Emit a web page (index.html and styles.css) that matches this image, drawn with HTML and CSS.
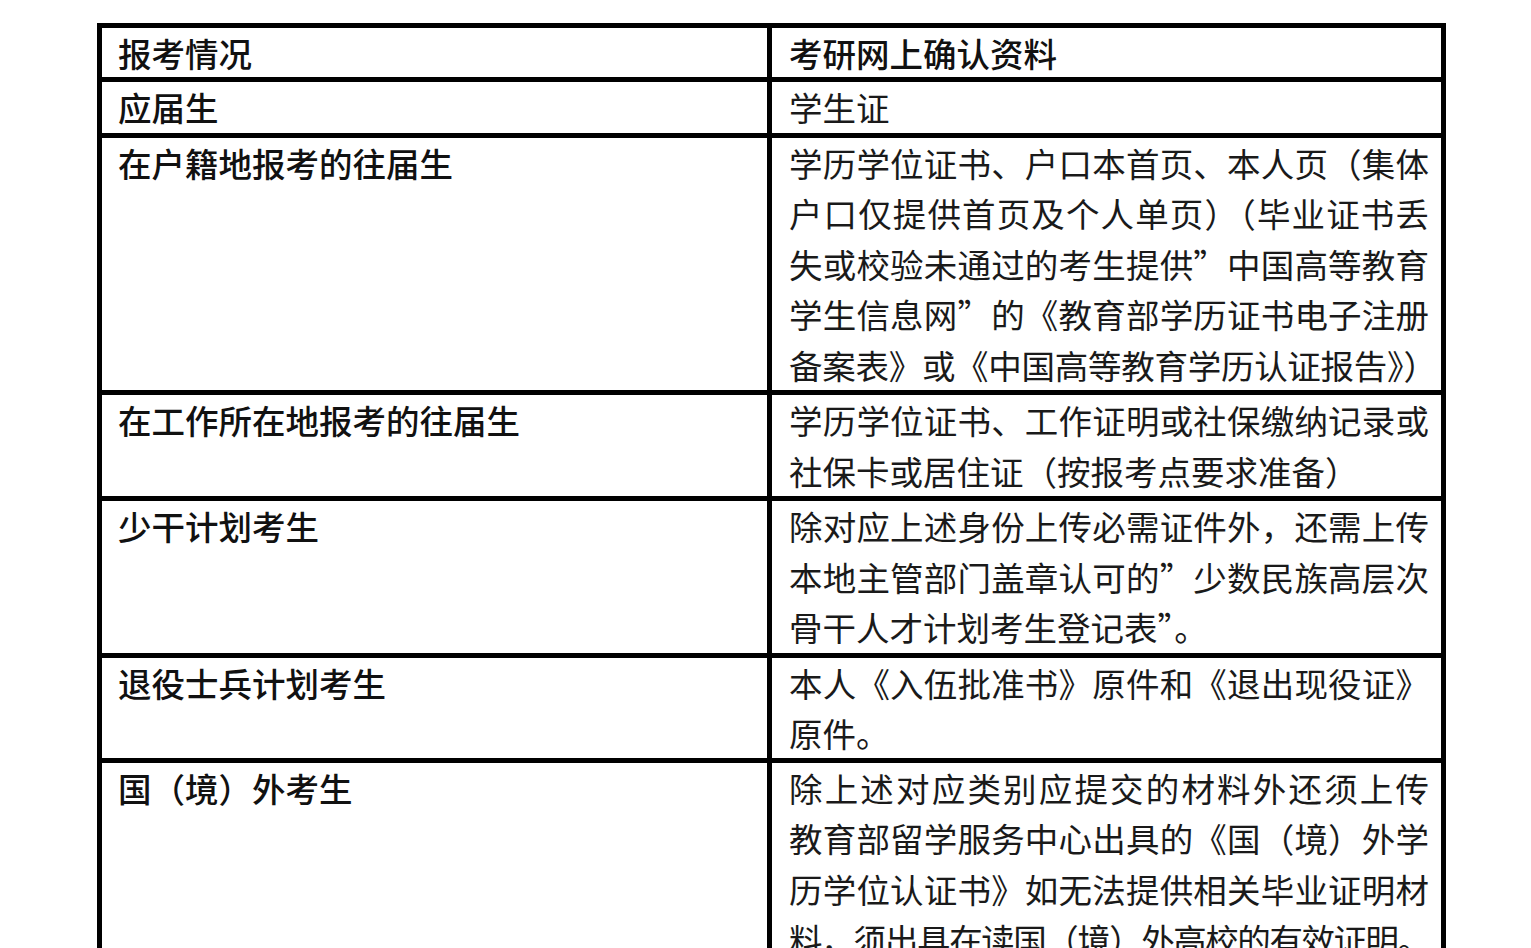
FILE: index.html
```html
<!DOCTYPE html>
<html lang="zh-CN">
<head>
<meta charset="utf-8">
<title>考研网上确认资料</title>
<link rel="stylesheet" href="styles.css">
</head>
<body>
<div class="sheet">
  <table class="grid">
    <colgroup>
      <col class="col-k">
      <col class="col-v">
    </colgroup>
    <tr class="head">
      <td class="k">报考情况</td>
      <td class="v b">考研网上确认资料</td>
    </tr>
    <tr>
      <td class="k">应届生</td>
      <td class="v">学生证</td>
    </tr>
    <tr>
      <td class="k">在户籍地报考的往届生</td>
      <td class="v">
        <div class="ln j">学历学位证书、户口本首页、本人页（集体</div>
        <div class="ln j">户口仅提供首页及个人单页）（毕业证书丢</div>
        <div class="ln j">失或校验未通过的考生提供”中国高等教育</div>
        <div class="ln j">学生信息网”的《教育部学历证书电子注册</div>
        <div class="ln j t w">备案表》或《中国高等教育学历认证报告》）</div>
      </td>
    </tr>
    <tr>
      <td class="k">在工作所在地报考的往届生</td>
      <td class="v">
        <div class="ln j">学历学位证书、工作证明或社保缴纳记录或</div>
        <div class="ln">社保卡或居住证（按报考点要求准备）</div>
      </td>
    </tr>
    <tr>
      <td class="k">少干计划考生</td>
      <td class="v">
        <div class="ln j">除对应上述身份上传必需证件外，还需上传</div>
        <div class="ln j">本地主管部门盖章认可的”少数民族高层次</div>
        <div class="ln">骨干人才计划考生登记表”。</div>
      </td>
    </tr>
    <tr class="short">
      <td class="k">退役士兵计划考生</td>
      <td class="v">
        <div class="ln j">本人《入伍批准书》原件和《退出现役证》</div>
        <div class="ln">原件。</div>
      </td>
    </tr>
    <tr>
      <td class="k">国（境）外考生</td>
      <td class="v">
        <div class="ln j">除上述对应类别应提交的材料外还须上传</div>
        <div class="ln j">教育部留学服务中心出具的《国（境）外学</div>
        <div class="ln j">历学位认证书》如无法提供相关毕业证明材</div>
        <div class="ln j t">料，须出具在读国（境）外高校的有效证明。</div>
      </td>
    </tr>
  </table>
</div>
</body>
</html>
```
FILE: styles.css
```css
html, body {
  margin: 0;
  padding: 0;
  background: #ffffff;
  overflow: hidden;
}

.sheet {
  padding: 23px 0 0 97px;
}

.grid {
  border-collapse: separate;
  border-spacing: 0;
  table-layout: fixed;
  width: 1348px;
  border-top: 5px solid #000;
  border-left: 5px solid #000;
  font-family: "Noto Sans CJK SC", "Noto Sans CJK JP", sans-serif;
  color: #111;
}

.col-k { width: 670px; }
.col-v { width: 674px; }

.grid td {
  box-sizing: border-box;
  border-right: 5px solid #000;
  border-bottom: 5px solid #000;
  vertical-align: top;
  padding: 0;
  font-size: 33.5px;
  line-height: 50.5px;
  white-space: nowrap;
}

.grid tr.head td { line-height: 49px; }
.grid tr.short td { line-height: 50px; }

.grid td.k {
  padding-left: 16px;
  font-weight: 500;
}

.grid td.v {
  padding-left: 17px;
  padding-right: 12px;
  font-weight: 400;
  color: #1a1a1a;
}

.grid td.v.b { font-weight: 500; color: #111; }

.ln { display: block; }
.ln.j { text-align: justify; text-align-last: justify; }
.ln.t { letter-spacing: -2px; }
.ln.w { margin-right: -6px; }
```
